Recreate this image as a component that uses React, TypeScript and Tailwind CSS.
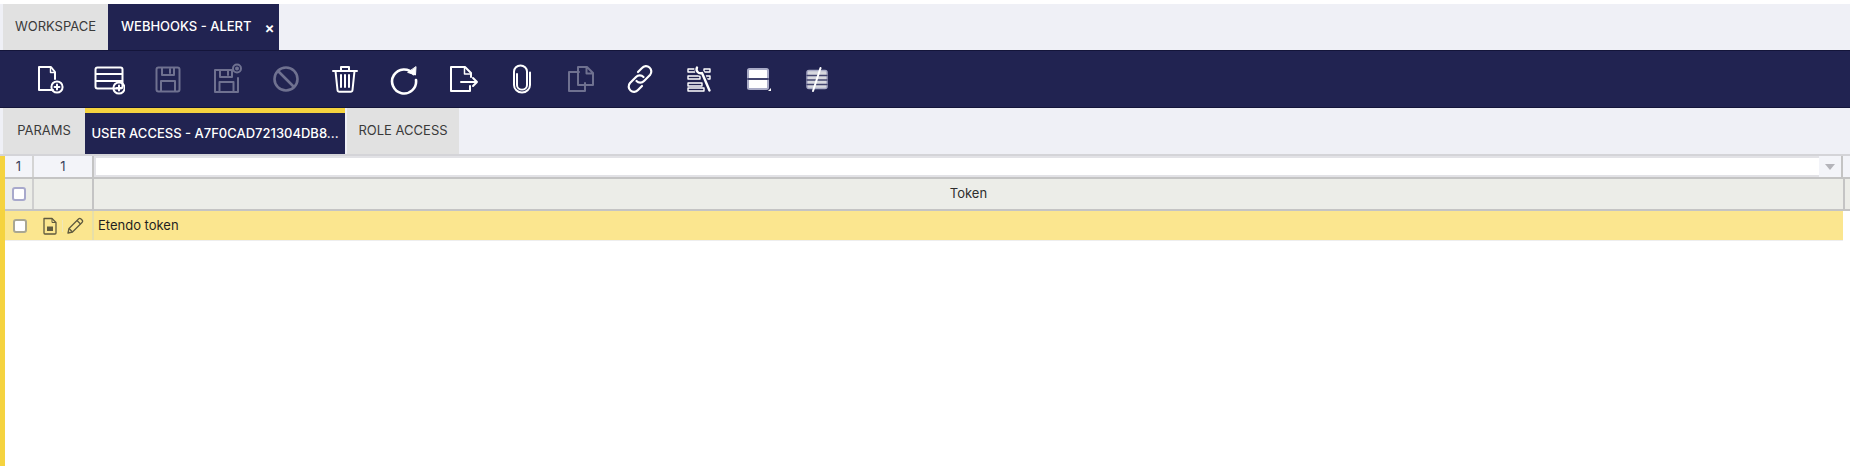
import type { ReactNode } from "react"

const FONT = "font-['Inter','Noto_Sans',sans-serif]"

function Glyph({ children, dim }: { children: ReactNode; dim?: boolean }) {
  return (
    <div className="flex h-full w-[59px] shrink-0 items-center justify-center">
      <svg
        width="32"
        height="32"
        viewBox="0 0 32 32"
        fill="none"
        stroke={dim ? "#6f7190" : "#ffffff"}
        strokeWidth="2"
        strokeLinecap="round"
        strokeLinejoin="round"
      >
        {children}
      </svg>
    </div>
  )
}

const PlusBadge = ({ cx, cy }: { cx: number; cy: number }) => (
  <>
    <circle cx={cx} cy={cy} r="5.6" />
    <path d={`M${cx - 2.4} ${cy}h4.8M${cx} ${cy - 2.4}v4.8`} />
  </>
)

function Toolbar() {
  return (
    <div className="flex h-[58px] items-center border-y border-[#14153a] bg-[#212351] pl-5">
      <Glyph>
        <path d="M19 27H5V4h12l4 5v7" />
        <path d="M16.5 4.5V9.5H21" strokeWidth="1.4" />
        <PlusBadge cx={23} cy={24} />
      </Glyph>
      <Glyph>
        <rect x="2.5" y="4.5" width="27" height="21" rx="2" />
        <path d="M3 11h26M3 18h26" />
        <PlusBadge cx={26} cy={25} />
      </Glyph>
      <Glyph dim>
        <rect x="4.5" y="4.5" width="23" height="24" rx="2" />
        <path d="M10 5v7h12V5M18 6v4M9 28V18h14v10" />
      </Glyph>
      <Glyph dim>
        <path d="M27 15v14H4V7h17" />
        <path d="M9 7v7h12V7M17 8v4M8.500 29V19h14v10" />
        <circle cx="26" cy="5.500" r="4" />
        <circle cx="26" cy="5.500" r="1" fill="#6f7190" />
      </Glyph>
      <Glyph dim>
        <circle cx="16" cy="16" r="11.500" strokeWidth="2.600" />
        <path d="M8 8l16 16" strokeWidth="2.600" />
      </Glyph>
      <Glyph>
        <path d="M4 8h24M12 7V4h8v3" />
        <path d="M6.500 8l2 19a2 2 0 0 0 2 1.800h11a2 2 0 0 0 2-1.800l2-19" />
        <path d="M12 12v12M16 12v12M20 12v12" />
      </Glyph>
      <Glyph>
        <path d="M25.500 11A12 12 0 1 0 28 17" strokeWidth="2.600" />
        <path d="M20 9.500l7.500 2.500L28 4z" fill="#ffffff" strokeWidth="1" />
      </Glyph>
      <Glyph>
        <path d="M24 14v-4l-6-6H4v24h19v-5" />
        <path d="M17.500 4.500V11H24" strokeWidth="1.500" />
        <path d="M14 19h16M26 15l4 4-4 4" />
      </Glyph>
      <Glyph>
        <path d="M11 10.500v11.500a5 5 0 0 0 10 0V8a6.500 6.500 0 0 0-13 0v14a8 8 0 0 0 16 0V9" transform="translate(0 1) scale(1 .95)" />
      </Glyph>
      <Glyph dim>
        <path d="M14 9H4v19h16v-8" />
        <path d="M13 4h9l6 6v12H13zM21.500 4.500V10.500H28" />
      </Glyph>
      <Glyph>
        <path d="M14 9l4-4a5.200 5.200 0 0 1 8 7l-6 6a5.200 5.200 0 0 1-7.500 0" strokeWidth="2.200" />
        <path d="M18 23l-4 4a5.200 5.200 0 0 1-8-7l6-6a5.200 5.200 0 0 1 7.500 0" strokeWidth="2.200" />
      </Glyph>
      <Glyph>
        <path d="M5 6h7v3H5zM21 6h6v3h-6zM5 13h12v3H5zM23 13h4v3h-4zM5 20h14v3H5zM5 25h16v3H5z" strokeWidth="1.400" />
        <path d="M14 5a4 4 0 0 0 5 5l8 18" stroke="#212351" strokeWidth="5" />
        <path d="M14 4.500a4 4 0 0 0 5 5.500l7.500 17.500" strokeWidth="2.400" />
      </Glyph>
      <Glyph>
        <rect x="6" y="6" width="20" height="20" rx="1.500" fill="#ffffff" stroke="#a9abc6" strokeWidth="2" />
        <path d="M6 16h20" stroke="#43456f" strokeWidth="2" />
        <path d="M29 28h-3l3-3z" fill="#ffffff" stroke="none" />
      </Glyph>
      <Glyph>
        <rect x="6" y="7.500" width="20" height="18" rx="2" fill="#d6d7de" stroke="#a9abc6" strokeWidth="1.500" />
        <path d="M6 12.500h20M6 17h20M6 21.500h20" stroke="#43456f" strokeWidth="1.300" />
        <path d="M19.500 5L12 28" strokeWidth="2" />
      </Glyph>
    </div>
  )
}

function SmallDocIcon() {
  return (
    <svg width="16" height="18" viewBox="0 0 16 18" fill="none" stroke="#5f5a3f" strokeWidth="1.300" strokeLinejoin="round">
      <path d="M2 1.500h8l4 4v10.500a1 1 0 0 1-1 1H3a1 1 0 0 1-1-1z" />
      <path d="M10 1.500v4h4" strokeWidth="1" />
      <path d="M5 9.500h6v4.500H5z" fill="#5f5a3f" stroke="none" />
    </svg>
  )
}

function PencilIcon() {
  return (
    <svg width="18" height="18" viewBox="0 0 18 18" fill="none" stroke="#5f5a3f" strokeWidth="1.300" strokeLinejoin="round">
      <path d="M2 16l1-4.500L12.500 2a1.800 1.800 0 0 1 2.500 0l1 1a1.800 1.800 0 0 1 0 2.500L6.500 15z" />
      <path d="M3 11.500L6.500 15M11 3.500l3.500 3.500" />
    </svg>
  )
}

function Checkbox({ border }: { border: string }) {
  return <div className={`h-[14px] w-[14px] rounded-[3px] border-2 bg-white ${border}`} />
}

export default function App() {
  return (
    <div className={`${FONT} flex h-[466px] w-[1850px] flex-col overflow-hidden bg-white text-[#2e2e2e]`}>
      {/* window tabs */}
      <div className="mt-[4px] flex h-[46px] bg-[#eff0f6] text-[13px]">
        <div className="ml-[3px] flex w-[105px] items-center justify-center bg-[#e1e1e1] text-[#3a3a3a]">WORKSPACE</div>
        <div className="flex w-[171px] items-center gap-[13px] bg-[#212351] pl-[13px] font-medium text-white">
          <span>WEBHOOKS - ALERT</span>
          <span className="text-[15px] font-semibold leading-none">×</span>
        </div>
      </div>

      <Toolbar />

      {/* sub tabs */}
      <div className="flex h-[46px] bg-[#eff0f6] text-[13px]">
        <div className="ml-[3px] flex w-[82px] items-center justify-center bg-[#e1e1e1] text-[#3a3a3a]">PARAMS</div>
        <div className="flex w-[260px] items-center justify-center border-t-[5px] border-[#f5d33f] bg-[#212351] font-medium text-white">
          USER ACCESS - A7F0CAD721304DB8...
        </div>
        <div className="ml-[2px] flex w-[112px] items-center justify-center bg-[#e1e1e1] text-[#3a3a3a]">ROLE ACCESS</div>
      </div>

      {/* grid */}
      <div className="flex flex-1 border-t-2 border-[#d4d4d8]">
        <div className="w-[5px] shrink-0 bg-[#f5d33f]" />
        <div className="flex-1 text-[13px]">
          <div className="flex h-[23px] border-b-2 border-[#c4c4c4] bg-[#f3f4f9] text-[#3a3f5c]">
            <div className="flex w-[29px] items-center justify-center border-r-2 border-[#d4d4d4]">1</div>
            <div className="flex w-[60px] items-center justify-center border-r-2 border-[#c4c4c4]">1</div>
            <div className="flex-1 border-y-2 border-l-2 border-[#e2e2e6] bg-white" />
            <div className="flex w-[24px] items-center justify-center border-r-2 border-[#c4c4c4]">
              <div className="h-0 w-0 border-x-[5px] border-t-[6px] border-x-transparent border-t-[#b4b4ba]" />
            </div>
            <div className="w-[7px]" />
          </div>
          <div className="flex h-[32px] border-b-2 border-[#c4c4c4] bg-[#ecede8]">
            <div className="flex w-[29px] items-center justify-center border-r-2 border-[#cfcfcf]">
              <Checkbox border="border-[#a8a9cc]" />
            </div>
            <div className="w-[60px] border-r-2 border-[#c4c4c4]" />
            <div className="flex flex-1 items-center justify-center border-r-2 border-[#c4c4c4] text-[#2e2e2e]">Token</div>
            <div className="w-[5px] bg-[#ecede8]" />
          </div>
          <div className="mr-[7px] flex h-[30px] border-b border-[#eee] bg-[#fbe68f]">
            <div className="flex w-[29px] items-center justify-center">
              <Checkbox border="border-[#a9a793]" />
            </div>
            <div className="flex w-[60px] items-center justify-between border-r-2 border-[#e7dfa8] pl-[8px] pr-[8px]">
              <SmallDocIcon />
              <div className="h-[12px] w-px bg-[#f0e7b8]" />
              <PencilIcon />
            </div>
            <div className="flex flex-1 items-center pl-[4px] text-[#1f1f1f]">Etendo token</div>
          </div>
        </div>
      </div>
    </div>
  )
}
